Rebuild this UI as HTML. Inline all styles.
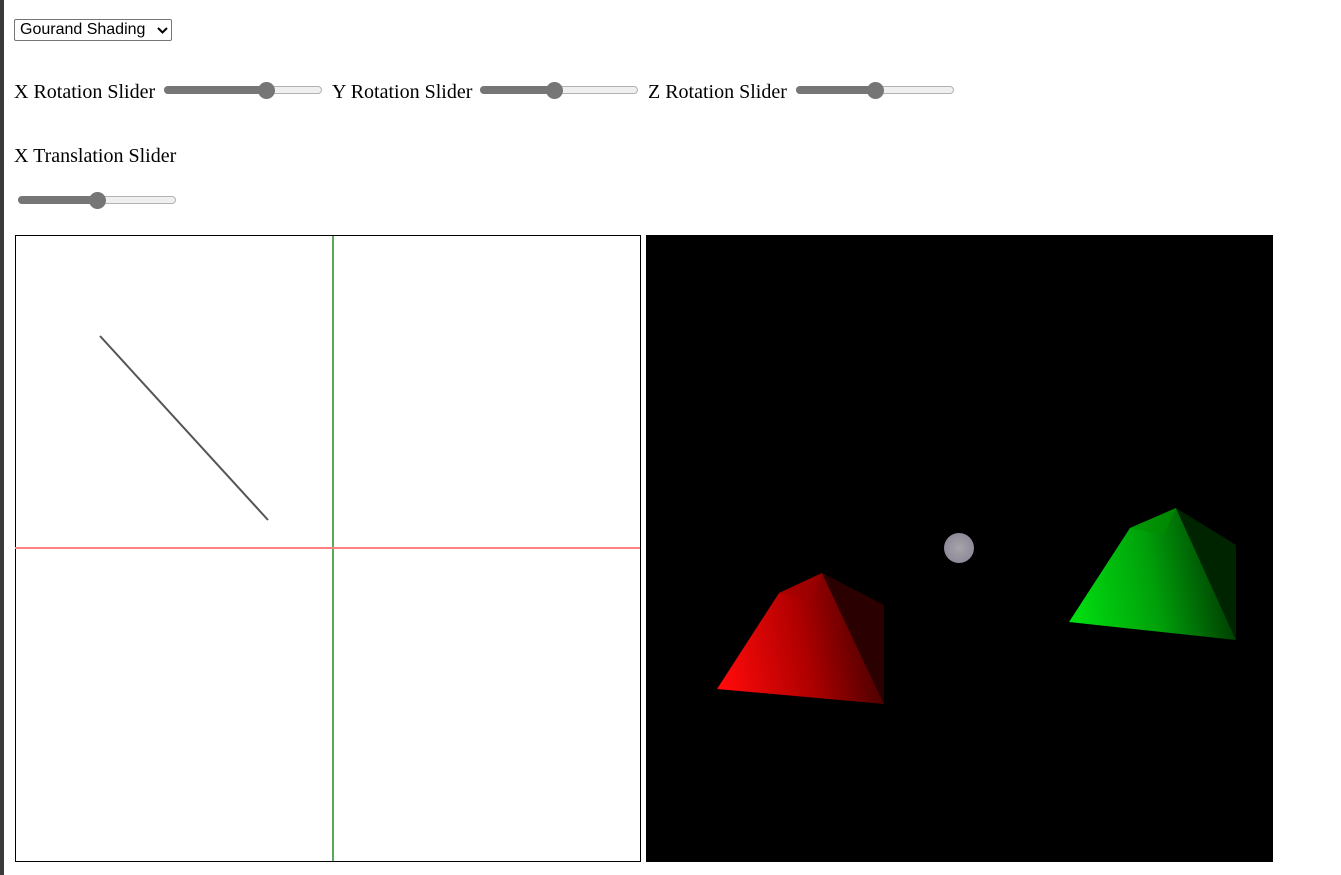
<!DOCTYPE html>
<html><head><style>
html,body{margin:0;padding:0;width:1341px;height:875px;overflow:hidden;background:#fff;font-family:"Liberation Serif",serif;}
.bar{position:absolute;left:0;top:0;width:4px;height:875px;background:#3a3a3a;}
.t{position:absolute;font-size:20px;color:#000;white-space:nowrap;}
.sel{position:absolute;left:14px;top:19px;width:158px;height:22px;border:1px solid #767676;border-radius:2px;font-family:"Liberation Sans",sans-serif;font-size:16px;box-sizing:border-box;padding-left:5px;line-height:20px;}
.sl{position:absolute;width:160px;height:16px;}
.sl .tr{position:absolute;left:0;top:4px;width:158px;height:8px;border-radius:4px;background:#efefef;border:1px solid #b2b2b2;box-sizing:border-box;}
.sl .fl{position:absolute;left:0;top:4px;height:8px;border-radius:4px;background:#767676;}
.sl .th{position:absolute;top:0;width:17px;height:17px;border-radius:50%;background:#767676;}
</style></head><body>
<div class="bar"></div>
<div class="sel">Gourand Shading<svg style="position:absolute;right:3px;top:7px" width="11" height="8" viewBox="0 0 11 8"><path d="M1 1 L5.5 5.5 L10 1" stroke="#000" stroke-width="2" fill="none"/></svg></div>
<div class="t" style="left:14px;top:81px">X Rotation Slider</div>
<div class="sl" style="left:164px;top:82px"><div class="tr"></div><div class="fl" style="width:108px"></div><div class="th" style="left:94px"></div></div>
<div class="t" style="left:332px;top:81px">Y Rotation Slider</div>
<div class="sl" style="left:480px;top:82px"><div class="tr"></div><div class="fl" style="width:80px"></div><div class="th" style="left:66px"></div></div>
<div class="t" style="left:648px;top:81px">Z Rotation Slider</div>
<div class="sl" style="left:796px;top:82px"><div class="tr"></div><div class="fl" style="width:85px"></div><div class="th" style="left:71px"></div></div>
<div class="t" style="left:14px;top:145px">X Translation Slider</div>
<div class="sl" style="left:18px;top:192px"><div class="tr"></div><div class="fl" style="width:85px"></div><div class="th" style="left:71px"></div></div>
<svg style="position:absolute;left:0;top:0" width="1341" height="875">
<rect x="15.5" y="235.5" width="625" height="626" fill="#fff" stroke="#000"/>
<line x1="333" y1="236" x2="333" y2="861" stroke="#5aaa5a" stroke-width="2"/>
<line x1="15" y1="548" x2="640" y2="548" stroke="#ff8080" stroke-width="2"/>
<line x1="100" y1="336" x2="268" y2="520" stroke="#555" stroke-width="2"/>
<rect x="646" y="235" width="627" height="627" fill="#000"/>
<defs>
<linearGradient id="rg" x1="717" y1="650" x2="884" y2="620" gradientUnits="userSpaceOnUse"><stop offset="0" stop-color="#ff0a0a"/><stop offset="0.5" stop-color="#b00000"/><stop offset="1" stop-color="#3a0000"/></linearGradient>
<linearGradient id="gg" x1="1069" y1="600" x2="1236" y2="570" gradientUnits="userSpaceOnUse"><stop offset="0" stop-color="#00e010"/><stop offset="0.5" stop-color="#00a00a"/><stop offset="1" stop-color="#003000"/></linearGradient>
<radialGradient id="sp"><stop offset="0" stop-color="#a8a4ac"/><stop offset="1" stop-color="#8e8a98"/></radialGradient>
</defs>
<polygon points="717,689 779,593 822,573 884,704" fill="url(#rg)"/>
<polygon points="822,573 884,605 884,704" fill="#2a0000"/>
<polygon points="779,593 822,573 810,600" fill="#a00000" opacity="0.6"/>
<polygon points="1069,622 1130,528 1176,508 1236,640" fill="url(#gg)"/>
<polygon points="1176,508 1236,545 1236,640" fill="#002400"/>
<polygon points="1130,528 1176,508 1164,535" fill="#009000" opacity="0.6"/>
<circle cx="959" cy="548" r="15" fill="url(#sp)"/>
</svg>
</body></html>
